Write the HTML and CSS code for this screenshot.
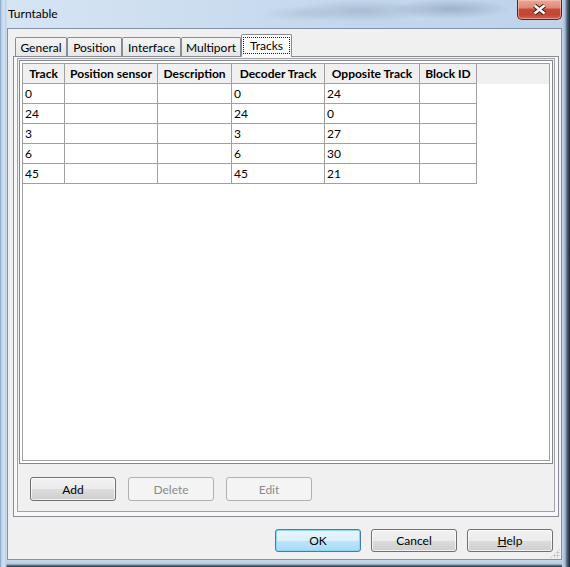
FILE: index.html
```html
<!doctype html>
<html>
    <head>
        <meta charset="utf-8">
        <title>Turntable</title>
        <link rel="stylesheet" href="styles.css">
    </head>
    <body>
        <div class="window">
            <div class="titlebar">
                <span class="title">Turntable</span>
                <button type="button" class="close" title="Close">
                    <svg width="45" height="20" viewBox="0 0 45 20">
                        <path d="M17.5 6.5 L27.5 14.5 M27.5 6.5 L17.5 14.5" stroke="#4b1d16" stroke-width="4.6" fill="none"/>
                        <path d="M17.5 6.5 L27.5 14.5 M27.5 6.5 L17.5 14.5" stroke="#fff" stroke-width="2.4" fill="none"/>
                    </svg>
                </button>
            </div>

            <div class="client">
                <div class="tabs">
                    <div class="tab tab-general">General</div>
                    <div class="tab tab-position">Position</div>
                    <div class="tab tab-interface">Interface</div>
                    <div class="tab tab-multiport">Multiport</div>
                    <div class="tab tab-tracks active"><span class="focus">Tracks</span></div>
                </div>

                <div class="panel">
                    <div class="page">
                        <div class="grid">
                            <div class="grid-inner">
                                <table class="grid-table">
                                    <colgroup>
                                        <col class="col-track">
                                        <col class="col-sensor">
                                        <col class="col-desc">
                                        <col class="col-decoder">
                                        <col class="col-opposite">
                                        <col class="col-block">
                                    </colgroup>
                                    <thead>
                                        <tr><th>Track</th><th>Position sensor</th><th>Description</th><th>Decoder Track</th><th>Opposite Track</th><th>Block ID</th></tr>
                                    </thead>
                                    <tbody>
                                        <tr><td>0</td><td></td><td></td><td>0</td><td>24</td><td></td></tr>
                                        <tr><td>24</td><td></td><td></td><td>24</td><td>0</td><td></td></tr>
                                        <tr><td>3</td><td></td><td></td><td>3</td><td>27</td><td></td></tr>
                                        <tr><td>6</td><td></td><td></td><td>6</td><td>30</td><td></td></tr>
                                        <tr><td>45</td><td></td><td></td><td>45</td><td>21</td><td></td></tr>
                                    </tbody>
                                </table>
                            </div>
                        </div>

                        <div class="grid-actions">
                            <button type="button" class="btn">Add</button>
                            <button type="button" class="btn" disabled>Delete</button>
                            <button type="button" class="btn" disabled>Edit</button>
                        </div>
                    </div>
                </div>

                <div class="dialog-actions">
                    <button type="button" class="btn default">OK</button>
                    <button type="button" class="btn">Cancel</button>
                    <button type="button" class="btn"><u>H</u>elp</button>
                </div>

                <div class="grip"></div>
            </div>
        </div>
    </body>
</html>
```

FILE: styles.css
```css
* {
    box-sizing: border-box;
}
html, body {
    margin: 0;
    padding: 0;
}
body {
    font-family: Lato, "Open Sans", sans-serif;
    font-size: 12px;
    color: #000;
    background: #1b2533;
}

/* Aero style window frame */
.window {
    width: 570px;
    height: 567px;
    display: flex;
    flex-direction: column;
    padding: 0 8px 7px 7px;
    background:
        linear-gradient(to right, #6f8cb0 0, #b6cde7 1px, #d4e3f3 4px, #b9cde3 6px, transparent 7px) left / 7px 100% no-repeat,
        linear-gradient(to right, #c4d6ea 0, #a4bad3 3px, #52657d 5px, #18212d 8px) right / 8px 100% no-repeat,
        linear-gradient(#c4d7eb, #b8cce2 55%, #56677c 80%, #232d3a) bottom / 100% 7px no-repeat,
        linear-gradient(to right, #d6e5f4, #c4d7ec 60%, #bed3ea);
}
.titlebar {
    height: 28px;
    display: flex;
    align-items: flex-start;
    margin: 0 -8px 0 -7px;
    padding-left: 8px;
    background:
        radial-gradient(ellipse 70px 11px at 360px 11px, rgba(118, 138, 163, .35), transparent),
        radial-gradient(ellipse 60px 10px at 450px 9px, rgba(105, 125, 150, .4), transparent),
        radial-gradient(ellipse 40px 8px at 300px 14px, rgba(150, 168, 190, .3), transparent);
}
.title {
    line-height: 28px;
}
.close {
    margin-left: auto;
    margin-right: 8px;
    width: 45px;
    height: 20px;
    padding: 0;
    border: 1px solid #5e241c;
    border-top: none;
    border-radius: 0 0 5px 5px;
    background: linear-gradient(#eaa898 0%, #dd8a78 40%, #c74a37 50%, #c24433 75%, #d2614c 100%);
    box-shadow: inset 0 0 0 1px rgba(255, 210, 200, .5);
}
.close svg {
    display: block;
    margin: -1px 0 0 -1px;
}

.client {
    flex: 1;
    position: relative;
    display: flex;
    flex-direction: column;
    padding: 5px 2px 0 5px;
    background: #f0f0f0;
    border: 1px solid #8393a6;
}

/* Notebook tabs */
.tabs {
    display: flex;
    align-items: flex-end;
    height: 22px;
    margin-left: 2px;
}
.tab {
    height: 19px;
    padding-top: 2px;
    line-height: 16px;
    text-align: center;
    border: 1px solid #898c95;
    border-bottom: none;
    border-radius: 2px 2px 0 0;
    background: linear-gradient(#f4f4f4, #e6e6e6);
}
.tab-general { width: 52px; }
.tab-position { width: 55px; }
.tab-interface { width: 59px; }
.tab-multiport { width: 60px; }
.tab-tracks { width: 51px; }
.tab.active {
    position: relative;
    z-index: 1;
    height: 23px;
    margin-bottom: -1px;
    padding-top: 2px;
    background: #fcfcfc;
}
.tab .focus {
    display: block;
    height: 17px;
    margin: 0 1px;
    line-height: 15px;
    border: 1px dotted #222;
}

.panel {
    height: 461px;
    width: 546px;
    border: 1px solid #898c95;
    background: #f7f7f7;
}
.page {
    height: 454px;
    margin: 1px 3px 0 3px;
    border: 1px solid #a3a3a3;
    background: #f0f0f0;
}

/* Track grid */
.grid {
    height: 404px;
    margin: 1px 1px 0;
    padding: 2px;
    border: 1px solid #828790;
    background: #fff;
}
.grid-inner {
    height: 100%;
    border: 1px solid #a0a0a0;
    background: linear-gradient(#f0f0f0 0, #f0f0f0 20px, #fff 20px);
}
.grid-table {
    table-layout: fixed;
    width: 454px;
    border-collapse: separate;
    border-spacing: 0;
}
.col-track { width: 42px; }
.col-sensor { width: 93px; }
.col-desc { width: 74px; }
.col-decoder { width: 93px; }
.col-opposite { width: 95px; }
.col-block { width: 57px; }
.grid-table th, .grid-table td {
    height: 20px;
    padding: 0 0 0 2px;
    line-height: 19px;
    white-space: nowrap;
    overflow: hidden;
    border-right: 1px solid #a0a0a0;
    border-bottom: 1px solid #a0a0a0;
}
.grid-table th {
    padding: 0;
    text-align: center;
    font-weight: bold;
    background: #f0f0f0;
}
.grid-table td {
    background: #fff;
}

/* Buttons */
.btn {
    width: 86px;
    height: 23px;
    padding: 0;
    font: inherit;
    color: #000;
    border: 1px solid #707070;
    border-radius: 3px;
    background: linear-gradient(#f2f2f2 0%, #ebebeb 50%, #dddddd 50%, #cfcfcf 100%);
    box-shadow: inset 0 0 0 1px rgba(255, 255, 255, .7);
}
.btn:disabled {
    color: #8b8b8b;
    border-color: #adb2b5;
    background: #f4f4f4;
    box-shadow: none;
}
.btn.default {
    border-color: #3c7fb1;
    background: linear-gradient(#eaf6fd 0%, #d9f0fc 50%, #bee6fd 50%, #a7d9f5 100%);
    box-shadow: inset 0 0 0 1px #8fd4f3;
}
.grid-actions {
    display: flex;
    gap: 12px;
    margin-top: 13px;
    padding-left: 12px;
}
.grid-actions .btn {
    height: 24px;
}
.dialog-actions {
    display: flex;
    justify-content: flex-end;
    gap: 10px;
    margin-top: 12px;
    padding-right: 6px;
}

/* size grip dots in the corner */
.grip {
    position: absolute;
    right: 1px;
    bottom: 1px;
    width: 10px;
    height: 10px;
    background: radial-gradient(circle, #b8b8b8 0.8px, transparent 1.2px) 0 0 / 3px 3px;
    clip-path: polygon(100% 0, 100% 100%, 0 100%);
}
```
